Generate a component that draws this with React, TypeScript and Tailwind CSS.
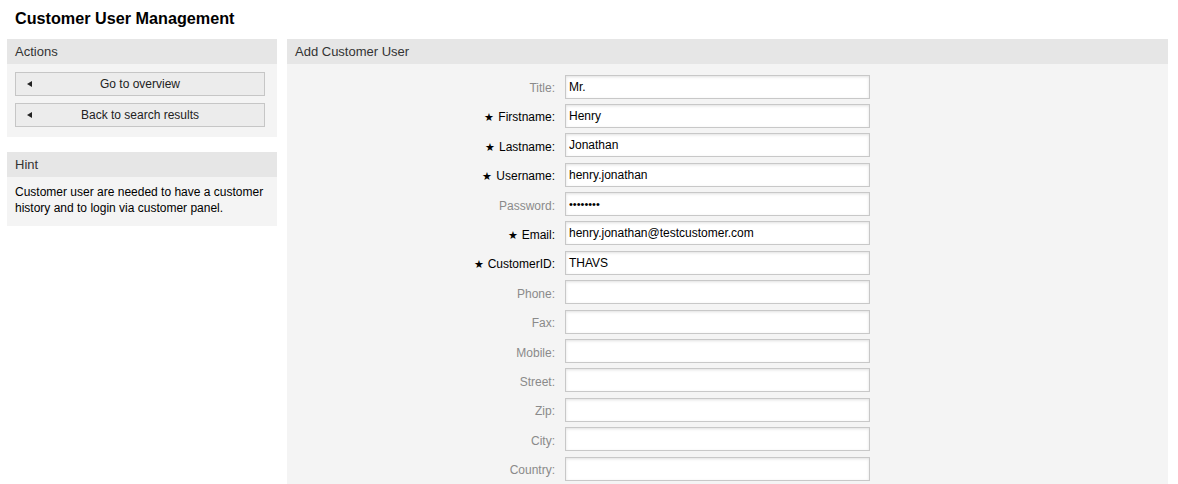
import React from 'react';

type Field = { label: string; value?: string; required?: boolean; password?: boolean };

const fields: Field[] = [
  { label: 'Title', value: 'Mr.' },
  { label: 'Firstname', value: 'Henry', required: true },
  { label: 'Lastname', value: 'Jonathan', required: true },
  { label: 'Username', value: 'henry.jonathan', required: true },
  { label: 'Password', value: '••••••••', password: true },
  { label: 'Email', value: 'henry.jonathan@testcustomer.com', required: true },
  { label: 'CustomerID', value: 'THAVS', required: true },
  { label: 'Phone' },
  { label: 'Fax' },
  { label: 'Mobile' },
  { label: 'Street' },
  { label: 'Zip' },
  { label: 'City' },
  { label: 'Country' },
];

function ActionButton({ label }: { label: string }) {
  return (
    <button className="relative w-full h-[24px] border border-[#c6c6c6] bg-[#ececec] text-[12px] text-[#222] flex items-center justify-center">
      <span className="absolute left-[11px] top-[8px] w-0 h-0 border-y-[3.5px] border-y-transparent border-r-[5px] border-r-[#222]" />
      {label}
    </button>
  );
}

export default function App() {
  return (
    <div className="w-[1178px] h-[484px] overflow-hidden bg-white text-[#222]" style={{ fontFamily: '"Liberation Sans", Arial, sans-serif' }}>
      <h1 className="pl-[15px] pt-[6px] h-[39px] text-[16.2px] font-bold text-black">Customer User Management</h1>

      <div className="flex gap-[10px] pl-[7px]">
        {/* Sidebar */}
        <div className="w-[270px] shrink-0 flex flex-col gap-[15px]">
          <div>
            <div className="h-[25px] bg-[#e6e6e6] px-[8px] flex items-center text-[13px] text-[#333]">Actions</div>
            <div className="bg-[#f4f4f4] pl-[8px] pr-[12px] pt-[8px] pb-[10px] flex flex-col gap-[7px]">
              <ActionButton label="Go to overview" />
              <ActionButton label="Back to search results" />
            </div>
          </div>
          <div>
            <div className="h-[25px] bg-[#e6e6e6] px-[8px] flex items-center text-[13px] text-[#333]">Hint</div>
            <div className="bg-[#f4f4f4] px-[8px] pt-[7px] pb-[10px] text-[12px] leading-[16px] text-black">
              Customer user are needed to have a customer history and to login via customer panel.
            </div>
          </div>
        </div>

        {/* Main panel */}
        <div className="w-[881px] shrink-0">
          <div className="h-[25px] bg-[#e6e6e6] px-[8px] flex items-center text-[13px] text-[#333]">Add Customer User</div>
          <div className="bg-[#f4f4f4] pt-[11px] pb-[20px] flex flex-col gap-[6.4px]">
            {fields.map((f) => (
              <div key={f.label} className="flex items-center h-[23px]">
                <label className={`w-[268px] pt-[3px] text-right text-[12px] ${f.required ? 'text-black' : 'text-[#8a8a8a]'}`}>
                  {f.required && <span className="text-[10.5px] mr-[4px]">★</span>}
                  {f.label}:
                </label>
                <div className="ml-[10px] w-[305px] h-[24px] bg-white border border-[#c8c8c8] shadow-[inset_0_1px_3px_rgba(0,0,0,0.12)] px-[3px] flex items-center text-[12px] text-black">
                  {f.password ? <span className="text-[11px]">{f.value}</span> : f.value}
                </div>
              </div>
            ))}
          </div>
        </div>
      </div>
    </div>
  );
}
